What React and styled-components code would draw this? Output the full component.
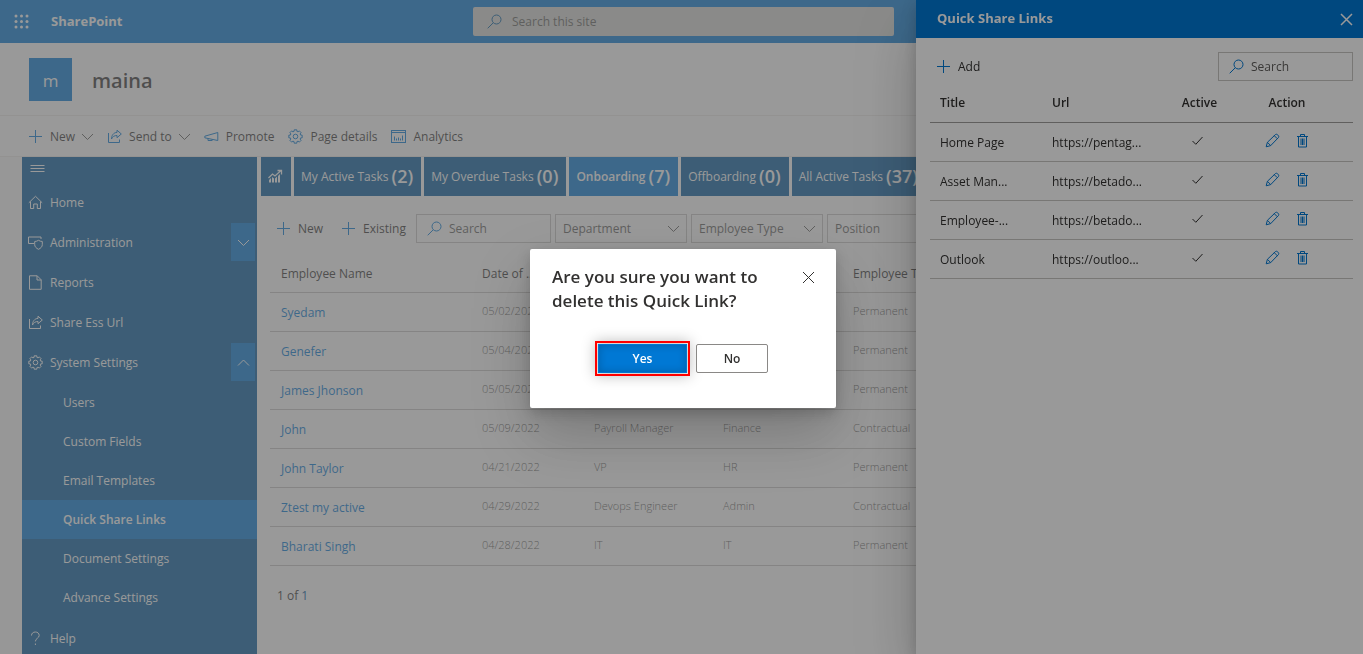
import React from 'react';
import styled, { createGlobalStyle, css } from 'styled-components';

const GlobalStyle = createGlobalStyle`
  *, *::before, *::after { box-sizing: border-box; }
  html, body, #root { height: 100%; }
  body {
    margin: 0;
    overflow: hidden;
    background: #fff;
    color: #323130;
    font: 400 12px/21px "Open Sans", "Noto Sans", sans-serif;
  }
  button, input, select { font: inherit; color: inherit; }
  h1, h2, ul { margin: 0; padding: 0; font-size: inherit; }
  ul { list-style: none; }
  a { text-decoration: none; color: inherit; }
`;

/* ---------- icons ---------- */

const Svg = styled.svg`
  display: block;
  flex: none;
  fill: none;
  stroke: currentColor;
  stroke-width: ${(p) => p.$weight || 1};
`;

const paths = {
  plus: <path d="M7.5 1v13M1 7.5h13" />,
  chevronDown: <path d="M2 5l5.500 5.500L13 5" />,
  chevronUp: <path d="M2 10.500L7.500 5l5.500 5.500" />,
  close: <path d="M2 2l11 11M13 2L2 13" />,
  search: <><circle cx="9.500" cy="5.500" r="4.500" /><path d="M6.300 8.700L.7 14.300" /></>,
  share: <path d="M1.500 4v9.500h11V10.500M10 1.200l4.300 3.800L10 8.700V6.500C7.500 6.500 5.500 7.500 4.500 10c0-3.500 2-6.500 5.500-6.600z" />,
  promote: <path d="M.8 7.200l13-3.700v8L.8 8.800zM4 9.500v2h4.200v-1.200" />,
  chart: <><rect x=".5" y="1.500" width="14" height="12" /><path d="M.5 3.500h14M3.500 11.500v-4M5.500 11.500v-2M7.500 11.500v-3M9.500 11.500v-2M11.500 11.500v-5" /></>,
  menu: <path d="M.5 4.500h14M.5 7.500h14M.5 10.500h14" />,
  home: <path d="M.8 7.800L7.500 1.300l6.700 6.500M2.500 6.500v7h3.200V9h3.600v4.500h3.200v-7" />,
  admin: <><path d="M6 8.500H.500v-6.500h12.500v2" /><path d="M10.500 5.300c1.200.8 2.300 1.100 3.800 1.200v3.200c0 2-1.600 3.600-3.800 4.600-2.200-1-3.800-2.600-3.800-4.600V6.500c1.500-.1 2.600-.4 3.800-1.200z" /></>,
  page: <path d="M1.500.8h7.700l4 4v9.500H1.500zM9 .8v4.200h4.200" />,
  help: <path d="M3.500 4.500C3.500 2.300 5.200 1 7.300 1s3.900 1.200 3.900 3.400c0 2.800-3.800 3-3.800 6M7.400 12.500v1.500" />,
  check: <path d="M2.500 8l3.300 3.300 6.700-7.300" />,
  pencil: <path d="M1.200 13.800l1.200-4.500L10.500 1.500c1.200-1.200 4.200 1.700 3 3L5.700 12.600zM2.400 9.300l3.300 3.300M9.300 2.700l3 3" />,
  trash: <path d="M2 3.500h11M5.500 3.500V1.500h4v2M3.500 3.500v10.500h8V3.500M6 5.500v6.500M7.500 5.500v6.500M9 5.500v6.500" />,
};

const Icon = ({ name, weight }) => (
  <Svg width="15" height="15" viewBox="0 0 15 15" $weight={weight} aria-hidden="true">{paths[name]}</Svg>
);

const gearPath = (() => {
  const pts = [];
  for (let i = 0; i < 8; i += 1) {
    const a = (i * Math.PI) / 4;
    [[-0.27, 5.3], [-0.2, 6.8], [0.2, 6.8], [0.27, 5.3]].forEach(([d, r]) => {
      pts.push(`${(7.5 + r * Math.cos(a + d)).toFixed(2)} ${(7.5 + r * Math.sin(a + d)).toFixed(2)}`);
    });
  }
  return `M${pts.join('L')}z`;
})();

const Gear = () => (
  <Svg width="15" height="15" viewBox="0 0 15 15" aria-hidden="true">
    <path d={gearPath} /><circle cx="7.500" cy="7.500" r="2.300" />
  </Svg>
);

const Waffle = () => (
  <Svg width="15" height="15" viewBox="0 0 15 15" aria-hidden="true">
    {[2, 7.5, 13].map((y) => [2, 7.5, 13].map((x) => (
      <circle key={`${x}-${y}`} cx={x} cy={y} r="1.500" fill="currentColor" stroke="none" />
    )))}
  </Svg>
);

const Growth = () => (
  <Svg width="15" height="15" viewBox="0 0 15 15" aria-hidden="true">
    <path d="M.5 9l4-4 2.500 2 5.500-5M9.500 1.500h4v4" strokeWidth="1.300" />
    <path d="M1 13.500V11l2-2v4.500zM4 13.500V8l2 1.500v4zM7 13.500V9.500l2-2v6zM10 13.500V7l2-2v8.500z" fill="currentColor" stroke="none" />
  </Svg>
);

/* ---------- page ---------- */

const Page = styled.div`
  display: flex;
  flex-direction: column;
  height: 100%;
  overflow: hidden;
`;

const SuiteBar = styled.header`
  flex: none;
  display: grid;
  grid-template-columns: 1fr 421px 1fr;
  align-items: center;
  height: 43px;
  padding: 0 10px 0 14px;
  background: #0078d4;
  color: #fff;
`;

const SuiteBrand = styled.div`
  display: flex;
  align-items: center;
  gap: 22px;
  font-size: 13px;
  font-weight: 700;
`;

const BareButton = styled.button`
  display: inline-flex;
  align-items: center;
  justify-content: center;
  padding: 0;
  border: 0;
  background: none;
  cursor: pointer;
`;

const SuiteSearch = styled.label`
  display: flex;
  align-items: center;
  gap: 10px;
  height: 29px;
  padding: 0 14px;
  border-radius: 2px;
  background: #d5d6d2;
  color: #005a9e;
`;

const BareInput = styled.input`
  flex: 1;
  min-width: 0;
  padding: 0;
  border: 0;
  outline: 0;
  background: none;
  color: #605e5c;
  &::placeholder { color: #605e5c; opacity: 1; }
`;

const SiteHeader = styled.div`
  flex: none;
  display: flex;
  align-items: center;
  gap: 20px;
  height: 73px;
  padding: 0 29px;
  border-bottom: 1px solid #edebe9;
`;

const SiteLogo = styled.div`
  display: grid;
  place-items: center;
  width: 43px;
  height: 43px;
  padding-top: 2px;
  background: #0078d4;
  color: #fff;
  font-size: 17px;
`;

const SiteName = styled.h1`
  padding-top: 4px;
  font-size: 20px;
  line-height: 28px;
  font-weight: 600;
`;

const CommandBar = styled.nav`
  flex: none;
  display: flex;
  align-items: center;
  gap: 14px;
  height: 41px;
  padding: 0 28px;
  border-bottom: 1px solid #edebe9;
`;

const Command = styled(BareButton)`
  gap: 7px;
  color: #323130;
  svg { color: #0078d4; }
  svg + span + svg { color: #605e5c; margin: 0 -2px; }
`;

const Body = styled.div`
  flex: 1;
  min-height: 0;
  display: flex;
  padding-left: 22px;
  background: #faf9f8;
`;

const Sidebar = styled.nav`
  flex: none;
  width: 235px;
  background: #005a9e;
  color: #fff;
`;

const MenuButton = styled(BareButton)`
  display: flex;
  height: 25px;
  padding: 0 8px 2px;
`;

const navRow = css`
  display: flex;
  align-items: center;
`;

const NavItem = styled.li`
  ${navRow}
  justify-content: space-between;
  height: 40px;
  padding: 0 2px 0 6px;
`;

const NavLink = styled.a`
  ${navRow}
  gap: 7px;
`;

const NavToggle = styled(BareButton)`
  width: 24px;
  height: 38px;
  background: #0078d4;
`;

const SubList = styled.ul`
  padding: 1px 0;
`;

const SubLink = styled.a`
  ${navRow}
  height: 39px;
  padding-left: 41px;
  background: ${(p) => (p.$active ? '#0078d4' : 'none')};
  font-weight: ${(p) => (p.$active ? 600 : 400)};
`;

const Main = styled.main`
  flex: 1;
  min-width: 0;
  overflow: hidden;
  padding-left: 4px;
  background: #fff;
`;

const Tabs = styled.div`
  display: flex;
  gap: 3px;
`;

const Tab = styled(BareButton)`
  flex: none;
  gap: 3px;
  height: 39px;
  padding: 0 8px 0 7px;
  background: ${(p) => (p.$active ? '#0078d4' : '#005a9e')};
  color: #fff;
  font-weight: ${(p) => (p.$active ? 600 : 400)};
  strong { font-size: 18px; font-weight: 600; }
`;

const Toolbar = styled.div`
  display: flex;
  align-items: center;
  gap: 4px;
  padding: 18px 15px 0;
`;

const ToolButton = styled(BareButton)`
  gap: 7px;
  color: #323130;
  margin-right: ${(p) => p.$after || 0}px;
  svg { color: #0078d4; }
`;

const SearchField = styled.label`
  flex: none;
  display: flex;
  align-items: center;
  gap: 7px;
  width: 135px;
  height: 29px;
  padding: 0 11px 0 10px;
  border: 1px solid #c8c6c4;
  color: #0078d4;
`;

const SelectField = styled.div`
  position: relative;
  flex: none;
  width: 132px;
  height: 29px;
  border: 1px solid #c8c6c4;
  color: #605e5c;
  select {
    width: 100%;
    height: 100%;
    padding: 0 7px;
    border: 0;
    background: none;
    appearance: none;
  }
  svg {
    position: absolute;
    top: 6px;
    right: 5px;
    pointer-events: none;
  }
`;

const Table = styled.table`
  border-collapse: collapse;
  table-layout: fixed;
  width: 100%;
  th, td {
    height: 39px;
    padding: 1px 10px 0;
    border-bottom: 1px solid #c8c6c4;
    text-align: left;
    white-space: nowrap;
    overflow: hidden;
  }
  th { font-weight: 400; }
`;

const EmployeeWrap = styled.div`
  padding: 10px 12px 0 9px;
  th { padding: 3px 10px 0 11px; }
  td { color: #605e5c; font-size: 11px; font-weight: 300; line-height: 18px; padding: 0 10px 1px 11px; }
  td:first-child { font-size: 12px; font-weight: 400; line-height: 20px; padding: 3px 10px 0 11px; }
  td a { color: #0078d4; }
`;

const Pager = styled.div`
  padding: 19px 16px;
  b { font-weight: 400; color: #005a9e; }
`;

/* ---------- side panel ---------- */

const Veil = styled.div`
  position: fixed;
  inset: 0;
  background: ${(p) => (p.$dark ? 'rgba(0, 0, 0, 0.4)' : 'rgba(255, 255, 255, 0.4)')};
`;

const Panel = styled.aside`
  position: fixed;
  top: 0;
  right: 0;
  bottom: 0;
  width: 447px;
  background: #fff;
  box-shadow: 0 26px 58px rgba(0, 0, 0, 0.22), 0 5px 14px rgba(0, 0, 0, 0.18);
`;

const PanelHeader = styled.header`
  display: flex;
  align-items: center;
  justify-content: space-between;
  height: 38px;
  padding: 0 9px 0 21px;
  background: #0078d4;
  color: #fff;
  h2 { font-size: 13px; line-height: 20px; font-weight: 700; padding-bottom: 2px; }
`;

const PanelBody = styled.div`
  padding: 14px 10px 0 14px;
`;

const PanelTools = styled.div`
  display: flex;
  align-items: center;
  justify-content: space-between;
  padding-left: 6px;
`;

const PanelTable = styled(Table)`
  margin-top: 2px;
  th { font-weight: 600; }
  thead th { border-bottom-color: #a19f9d; }
  th:nth-child(3), th:nth-child(4) { text-align: center; }
`;

const CellIcons = styled.div`
  display: flex;
  justify-content: center;
  gap: 15px;
  padding: ${(p) => (p.$link ? '0 0 4px' : '0 4px 4px 0')};
  color: ${(p) => (p.$link ? '#0078d4' : '#323130')};
`;

/* ---------- dialog ---------- */

const DialogLayer = styled.div`
  position: fixed;
  inset: 0;
  display: grid;
  place-items: center;
  padding: 3px 0 0 3px;
`;

const Dialog = styled.div`
  width: 306px;
  padding: 16px 20px 35px 22px;
  border-radius: 2px;
  background: #fff;
  box-shadow: 0 26px 58px rgba(0, 0, 0, 0.22), 0 5px 14px rgba(0, 0, 0, 0.18);
`;

const DialogTop = styled.div`
  display: flex;
  align-items: flex-start;
  justify-content: space-between;
  h2 { width: 215px; font-size: 17px; line-height: 24px; font-weight: 600; }
  button { height: 24px; }
`;

const DialogActions = styled.div`
  display: flex;
  justify-content: center;
  gap: 9px;
  padding: 31px 2px 0 0;
`;

const DialogButton = styled(BareButton)`
  width: ${(p) => (p.$primary ? 89 : 72)}px;
  height: 29px;
  border: 1px solid ${(p) => (p.$primary ? '#0078d4' : '#8a8886')};
  border-radius: ${(p) => (p.$primary ? 0 : 2)}px;
  background: ${(p) => (p.$primary ? '#0078d4' : '#fff')};
  color: ${(p) => (p.$primary ? '#fff' : '#323130')};
  font-weight: 600;
  ${(p) => p.$primary && css`
    outline: 2px solid #f00;
    outline-offset: 1px;
    box-shadow: inset 0 0 8px rgba(0, 0, 0, 0.2), 0 0 14px 3px rgba(0, 0, 0, 0.25);
  `}
`;

/* ---------- data ---------- */

const tabs = [
  ['My Active Tasks', 2], ['My Overdue Tasks', 0], ['Onboarding', 7], ['Offboarding', 0], ['All Active Tasks', 37],
];

const settings = ['Users', 'Custom Fields', 'Email Templates', 'Quick Share Links', 'Document Settings', 'Advance Settings'];

const employees = [
  ['Syedam', '05/02/2022', '', '', 'Permanent'],
  ['Genefer', '05/04/2022', '', '', 'Permanent'],
  ['James Jhonson', '05/05/2022', '', '', 'Permanent'],
  ['John', '05/09/2022', 'Payroll Manager', 'Finance', 'Contractual'],
  ['John Taylor', '04/21/2022', 'VP', 'HR', 'Permanent'],
  ['Ztest my active', '04/29/2022', 'Devops Engineer', 'Admin', 'Contractual'],
  ['Bharati Singh', '04/28/2022', 'IT', 'IT', 'Permanent'],
];

const links = [
  ['Home Page', 'https://pentag...'], ['Asset Man...', 'https://betado...'],
  ['Employee-...', 'https://betado...'], ['Outlook', 'https://outloo...'],
];

const NavEntry = ({ icon, label, toggle }) => (
  <NavItem>
    <NavLink href="#">{icon === 'gear' ? <Gear /> : <Icon name={icon} />}{label}</NavLink>
    {toggle && <NavToggle aria-label={`Toggle ${label}`}><Icon name={toggle} /></NavToggle>}
  </NavItem>
);

const Filter = ({ label }) => (
  <SelectField>
    <select aria-label={label}><option>{label}</option></select>
    <Icon name="chevronDown" />
  </SelectField>
);

const Search = () => (
  <SearchField><Icon name="search" /><BareInput placeholder="Search" aria-label="Search" /></SearchField>
);

export default function App() {
  return (
    <>
      <GlobalStyle />
      <Page>
        <SuiteBar>
          <SuiteBrand>
            <BareButton aria-label="App launcher"><Waffle /></BareButton>
            <a href="#">SharePoint</a>
          </SuiteBrand>
          <SuiteSearch>
            <Icon name="search" />
            <BareInput placeholder="Search this site" aria-label="Search this site" />
          </SuiteSearch>
        </SuiteBar>
        <SiteHeader>
          <SiteLogo>m</SiteLogo>
          <SiteName>maina</SiteName>
        </SiteHeader>
        <CommandBar>
          <Command><Icon name="plus" /><span>New</span><Icon name="chevronDown" /></Command>
          <Command><Icon name="share" /><span>Send to</span><Icon name="chevronDown" /></Command>
          <Command><Icon name="promote" /><span>Promote</span></Command>
          <Command><Gear /><span>Page details</span></Command>
          <Command><Icon name="chart" /><span>Analytics</span></Command>
        </CommandBar>
        <Body>
          <Sidebar>
            <MenuButton aria-label="Menu"><Icon name="menu" /></MenuButton>
            <ul>
              <NavEntry icon="home" label="Home" />
              <NavEntry icon="admin" label="Administration" toggle="chevronDown" />
              <NavEntry icon="page" label="Reports" />
              <NavEntry icon="share" label="Share Ess Url" />
              <NavEntry icon="gear" label="System Settings" toggle="chevronUp" />
              <li>
                <SubList>
                  {settings.map((s) => (
                    <li key={s}><SubLink href="#" $active={s === 'Quick Share Links'}>{s}</SubLink></li>
                  ))}
                </SubList>
              </li>
              <NavEntry icon="help" label="Help" />
            </ul>
          </Sidebar>
          <Main>
            <Tabs>
              <Tab aria-label="Dashboard"><Growth /></Tab>
              {tabs.map(([label, n]) => (
                <Tab key={label} $active={label === 'Onboarding'}>{label}<strong>({n})</strong></Tab>
              ))}
            </Tabs>
            <Toolbar>
              <ToolButton $after={14}><Icon name="plus" />New</ToolButton>
              <ToolButton $after={6}><Icon name="plus" />Existing</ToolButton>
              <Search />
              <Filter label="Department" />
              <Filter label="Employee Type" />
              <Filter label="Position" />
            </Toolbar>
            <EmployeeWrap>
              <Table>
                <colgroup>
                  <col width="201" /><col width="112" /><col width="129" /><col width="130" /><col />
                </colgroup>
                <thead>
                  <tr><th>Employee Name</th><th>Date of ...</th><th aria-label="Position" /><th aria-label="Department" /><th>Employee Type</th></tr>
                </thead>
                <tbody>
                  {employees.map(([name, ...rest]) => (
                    <tr key={name}>
                      <td><a href="#">{name}</a></td>
                      {rest.map((c, i) => <td key={i}>{c}</td>)}
                    </tr>
                  ))}
                </tbody>
              </Table>
            </EmployeeWrap>
            <Pager>1 of <b>1</b></Pager>
          </Main>
        </Body>
      </Page>
      <Veil />
      <Panel aria-label="Quick Share Links">
        <PanelHeader>
          <h2>Quick Share Links</h2>
          <BareButton aria-label="Close panel"><Icon name="close" weight={1.5} /></BareButton>
        </PanelHeader>
        <PanelBody>
          <PanelTools>
            <ToolButton><Icon name="plus" />Add</ToolButton>
            <Search />
          </PanelTools>
          <PanelTable>
            <colgroup><col width="112" /><col width="114" /><col width="87" /><col width="88" /><col /></colgroup>
            <thead>
              <tr><th>Title</th><th>Url</th><th>Active</th><th>Action</th><th aria-label="More" /></tr>
            </thead>
            <tbody>
              {links.map(([title, url]) => (
                <tr key={title}>
                  <td>{title}</td>
                  <td>{url}</td>
                  <td><CellIcons><Icon name="check" /></CellIcons></td>
                  <td>
                    <CellIcons $link>
                      <BareButton aria-label={`Edit ${title}`}><Icon name="pencil" /></BareButton>
                      <BareButton aria-label={`Delete ${title}`}><Icon name="trash" /></BareButton>
                    </CellIcons>
                  </td>
                  <td />
                </tr>
              ))}
            </tbody>
          </PanelTable>
        </PanelBody>
      </Panel>
      <Veil $dark />
      <DialogLayer>
        <Dialog role="dialog" aria-modal="true" aria-labelledby="confirm-title">
          <DialogTop>
            <h2 id="confirm-title">Are you sure you want to delete this Quick Link?</h2>
            <BareButton aria-label="Close"><Icon name="close" /></BareButton>
          </DialogTop>
          <DialogActions>
            <DialogButton $primary>Yes</DialogButton>
            <DialogButton>No</DialogButton>
          </DialogActions>
        </Dialog>
      </DialogLayer>
    </>
  );
}
